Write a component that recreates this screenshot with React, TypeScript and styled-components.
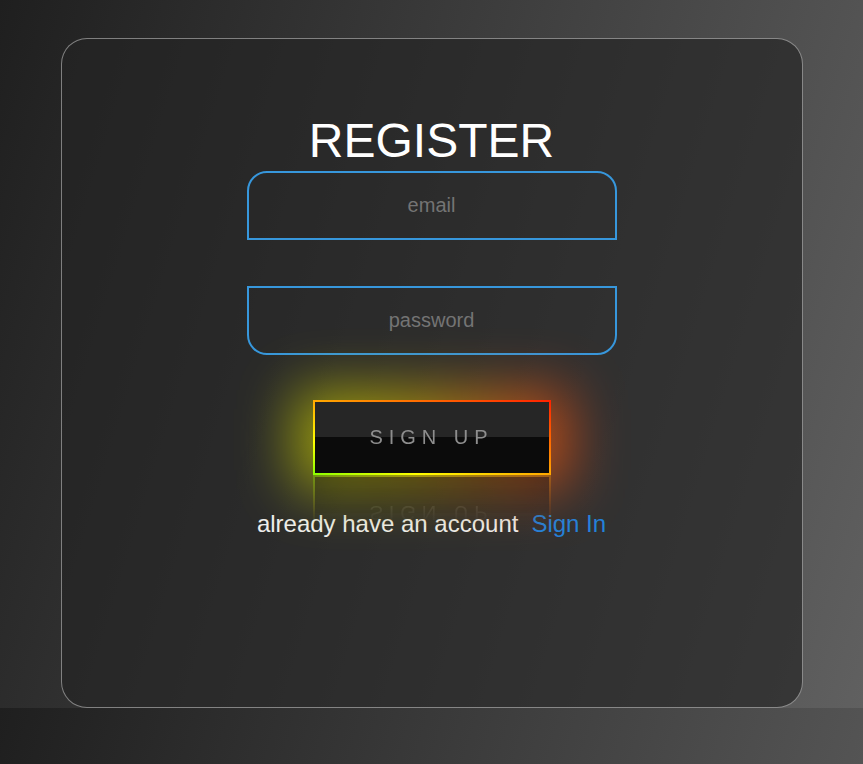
import React from "react";
import styled, { createGlobalStyle } from "styled-components";

const Global = createGlobalStyle`
  html {
    background: linear-gradient(107deg, #1f1f1f 0%, #606060 100%);
    background-size: 100% 708px;
    background-repeat: repeat;
  }
  body {
    margin: 0;
    font-family: "Liberation Sans", Arial, sans-serif;
  }
  * { box-sizing: border-box; }
`;

const Card = styled.div`
  width: 742px;
  height: 670px;
  margin: 38px auto 0;
  border: 1px solid rgba(255, 255, 255, 0.42);
  border-radius: 26px;
  background: rgba(36, 36, 36, 0.67);
  display: flex;
  flex-direction: column;
  align-items: center;
  padding-top: 74px;
`;

const Title = styled.h1`
  margin: 0;
  font-size: 48px;
  line-height: 55px;
  font-weight: 400;
  color: #ffffff;
  letter-spacing: 0;
`;

const Field = styled.input<{ $pos: "top" | "bottom" }>`
  width: 370px;
  height: 69px;
  margin-top: ${(p) => (p.$pos === "top" ? "3px" : "46px")};
  border: 2px solid #3797dc;
  border-radius: ${(p) => (p.$pos === "top" ? "20px 20px 0 0" : "0 0 20px 20px")};
  background: transparent;
  outline: none;
  text-align: center;
  font-family: "Liberation Sans", Arial, sans-serif;
  font-size: 20px;
  color: #dddddd;
  &::placeholder {
    color: #747474;
  }
`;

const GlowWrap = styled.div`
  position: relative;
  margin-top: 45px;
  isolation: isolate;
  &::before {
    content: "";
    position: absolute;
    inset: -10px -18px -14px;
    background: linear-gradient(to right, #c8d400 0%, #d0b800 40%, #e07010 75%, #ff4a10 100%);
    filter: blur(28px);
    opacity: 0.7;
    z-index: -1;
  }
`;

const SignUp = styled.button`
  display: flex;
  align-items: center;
  justify-content: center;
  width: 238px;
  height: 75px;
  padding: 0;
  border: 2px solid;
  border-image: linear-gradient(to top right, #8cff00 0%, #ffff00 22%, #ff9000 58%, #ff2200 100%) 1;
  background: linear-gradient(to bottom, #262626 0%, #262626 50%, #0b0b0b 50%, #0b0b0b 100%);
  color: #8e8e8e;
  font-family: "Liberation Sans", Arial, sans-serif;
  font-size: 20px;
  letter-spacing: 6px;
  cursor: pointer;
  -webkit-box-reflect: below 0px linear-gradient(transparent 30%, rgba(255, 255, 255, 0.3));
`;

const Footer = styled.p`
  margin: 35px 0 0;
  font-size: 24px;
  line-height: 28px;
  color: #eeeeee;
  display: flex;
  gap: 13px;
`;

const Link = styled.a`
  color: #2282dc;
  text-decoration: none;
  cursor: pointer;
`;

export default function App() {
  return (
    <>
      <Global />
      <Card>
        <Title>REGISTER</Title>
        <Field $pos="top" type="email" placeholder="email" />
        <Field $pos="bottom" type="password" placeholder="password" />
        <GlowWrap>
          <SignUp type="button">SIGN UP</SignUp>
        </GlowWrap>
        <Footer>
          <span>already have an account</span>
          <Link>Sign In</Link>
        </Footer>
      </Card>
    </>
  );
}
